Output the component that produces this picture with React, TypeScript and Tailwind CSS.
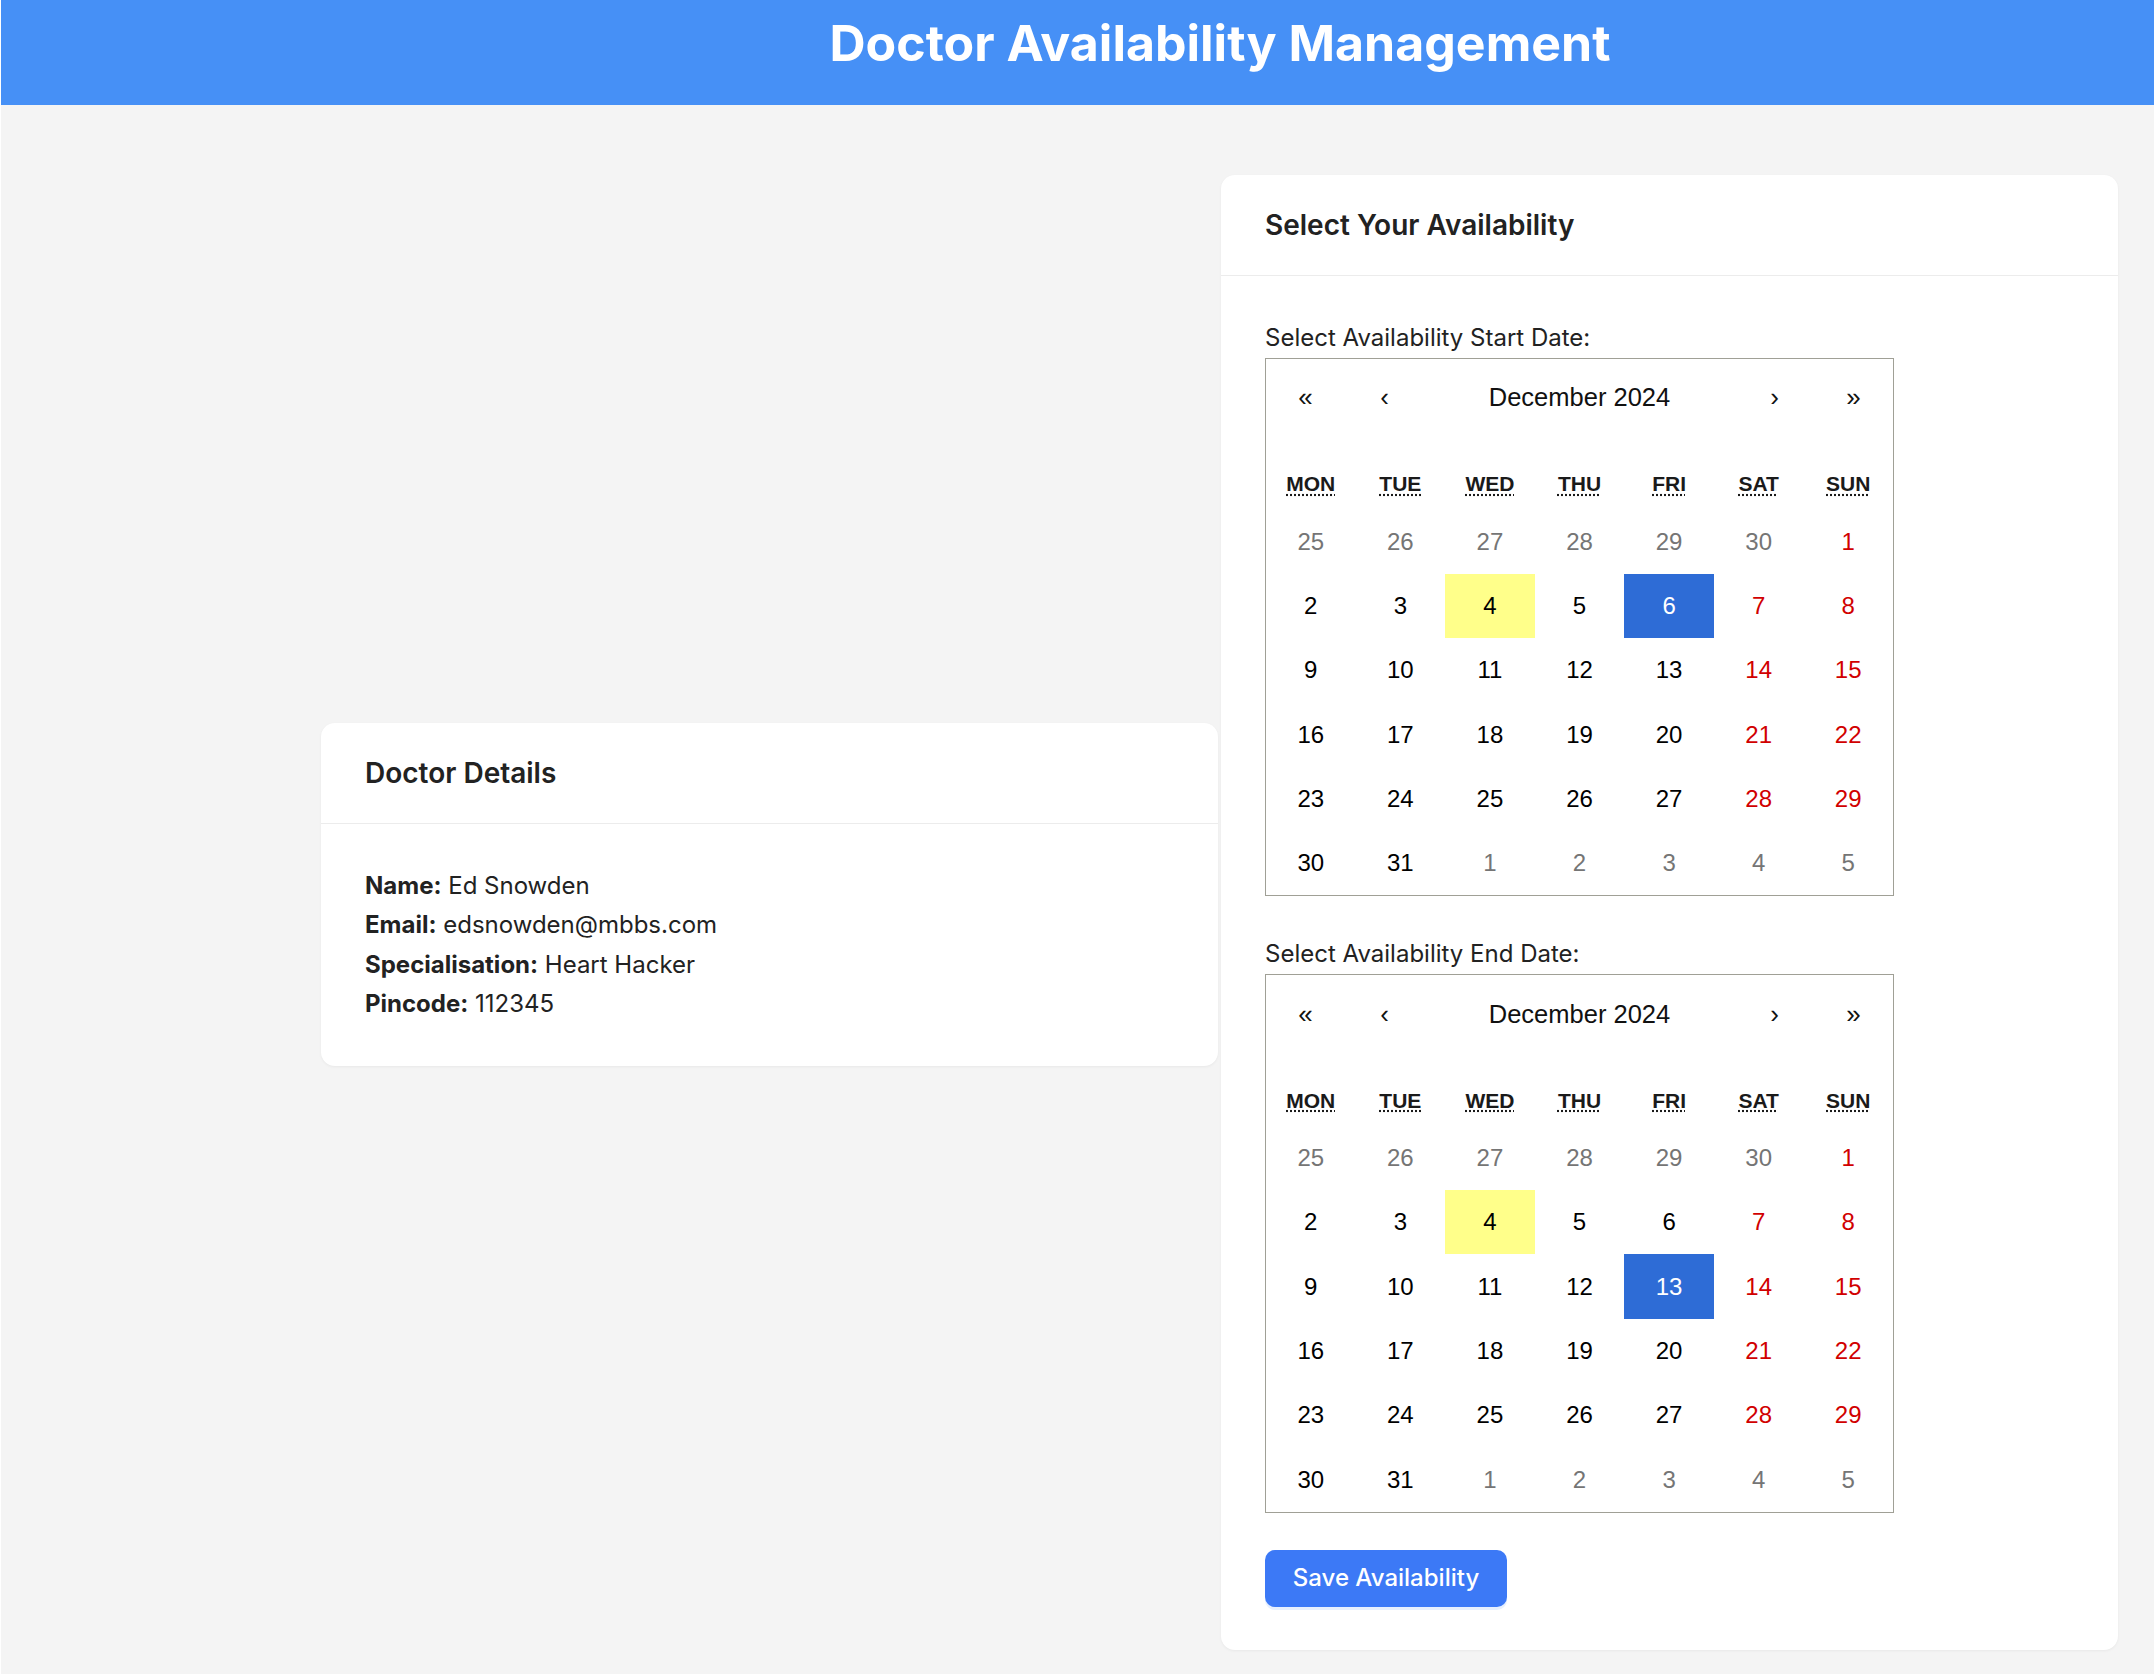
import { useState } from 'react';

const weekdays = [
    ['MON', 'Monday'],
    ['TUE', 'Tuesday'],
    ['WED', 'Wednesday'],
    ['THU', 'Thursday'],
    ['FRI', 'Friday'],
    ['SAT', 'Saturday'],
    ['SUN', 'Sunday'],
];

type Day = { n: number; cur: boolean };

function buildDays(): Day[] {
    const days: Day[] = [];
    for (let d = 25; d <= 30; d++) days.push({ n: d, cur: false });
    for (let d = 1; d <= 31; d++) days.push({ n: d, cur: true });
    for (let d = 1; d <= 5; d++) days.push({ n: d, cur: false });
    return days;
}

const days = buildDays();

function Calendar({ selected, onSelect }: { selected: number; onSelect: (n: number) => void }) {
    return (
        <div className="w-[629px] border border-[#a0a096] bg-white font-['Liberation_Sans',Arial,sans-serif] text-black">
            <div className="flex h-[79px] items-stretch text-[26px]">
                <button className="w-[79px] text-[#111]">«</button>
                <button className="w-[79px] text-[#111]">‹</button>
                <button className="flex-1 text-[25.5px] text-[#111]">December 2024</button>
                <button className="w-[79px] text-[#111]">›</button>
                <button className="w-[79px] text-[#111]">»</button>
            </div>
            <div className="mt-[21px] grid h-[51px] grid-cols-7 items-center text-center text-[21px] font-bold text-[#1a1a1a]">
                {weekdays.map(([short, long]) => (
                    <div key={short}>
                        <abbr title={long} className="underline decoration-dotted underline-offset-[3px]">{short}</abbr>
                    </div>
                ))}
            </div>
            <div className="grid grid-cols-7">
                {days.map((d, i) => {
                    const weekend = i % 7 >= 5;
                    const isSel = d.cur && d.n === selected;
                    const isToday = d.cur && d.n === 4;
                    let cls = 'text-black';
                    if (!d.cur) cls = 'text-[#757575]';
                    else if (weekend) cls = 'text-[#d10000]';
                    if (isToday) cls += ' bg-[#ffff8a]';
                    if (isSel) cls = 'bg-[#2e6cd6] text-white';
                    return (
                        <button
                            key={i}
                            onClick={() => d.cur && onSelect(d.n)}
                            className={`flex h-[64.3px] items-center justify-center text-[24px] ${cls}`}
                        >
                            {d.n}
                        </button>
                    );
                })}
            </div>
        </div>
    );
}

export default function App() {
    const [start, setStart] = useState(6);
    const [end, setEnd] = useState(13);

    return (
        <div className="min-h-screen border-l border-white bg-[#f4f4f4] font-['Inter',sans-serif] text-[#222]">
            <header className="h-[105px] bg-[#4690f6] pl-[285px] pt-[16px] text-center">
                <h1 className="text-[50px] leading-[54px] font-bold text-white">Doctor Availability Management</h1>
            </header>

            <main className="flex items-center justify-center pl-[284px] pt-[70px] pb-[26px]">
                <div className="mb-[36px] mr-[3px] w-[897px] rounded-[14px] bg-white shadow-[0_1px_3px_rgba(0,0,0,0.05)]">
                    <div className="border-b border-[#ececec] px-[44px] pt-[28px] pb-[27px]">
                        <h2 className="text-[28px] leading-[45px] font-semibold">Doctor Details</h2>
                    </div>
                    <div className="px-[44px] pt-[42px] pb-[42px] text-[24px] leading-[39.5px]">
                        <p><strong className="font-bold">Name:</strong> Ed Snowden</p>
                        <p><strong className="font-bold">Email:</strong> edsnowden@mbbs.com</p>
                        <p><strong className="font-bold">Specialisation:</strong> Heart Hacker</p>
                        <p><strong className="font-bold">Pincode:</strong> 112345</p>
                    </div>
                </div>

                <div className="w-[897px] rounded-[14px] bg-white shadow-[0_1px_3px_rgba(0,0,0,0.05)]">
                    <div className="border-b border-[#ececec] px-[44px] pt-[28px] pb-[27px]">
                        <h2 className="text-[28px] leading-[45px] font-semibold">Select Your Availability</h2>
                    </div>
                    <div className="px-[44px] pt-[42px] pb-[43px] text-[24px] leading-[39.5px]">
                        <label className="block">Select Availability Start Date:</label>
                        <Calendar selected={start} onSelect={setStart} />
                        <label className="mt-[38px] block">Select Availability End Date:</label>
                        <Calendar selected={end} onSelect={setEnd} />
                        <button className="mt-[37px] h-[57px] w-[242px] rounded-[10px] bg-[#3c79f6] text-[24px] font-medium text-white shadow-[0_3px_0_rgba(59,130,246,0.12)]">
                            Save Availability
                        </button>
                    </div>
                </div>
            </main>
        </div>
    );
}
